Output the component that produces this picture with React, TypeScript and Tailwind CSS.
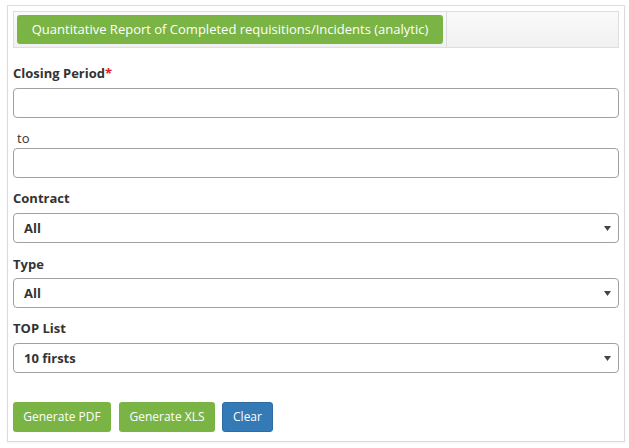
import React from "react";

const font = { fontFamily: '"Open Sans", "Noto Sans", sans-serif' };

function Arrow() {
  return (
    <svg width="7" height="5" viewBox="0 0 7 5" className="absolute right-[7px] top-[12px]">
      <path d="M0 0 H7 L3.5 5 Z" fill="#444" />
    </svg>
  );
}

function Select({ value }: { value: string }) {
  return (
    <div className="relative h-[30px] w-full rounded-[4px] border border-[#a0a0a0] bg-white pl-[10px] text-[13px] font-bold leading-[28px] text-[#333]">
      {value}
      <Arrow />
    </div>
  );
}

function Input() {
  return <div className="h-[30px] w-full rounded-[4px] border border-[#a0a0a0] bg-white" />;
}

export default function App() {
  return (
    <div className="h-[448px] w-[629px] bg-white pl-[7px] pt-[5px]" style={font}>
      <div className="w-[618px] border border-[#dcdcdc] bg-white px-[5px] pt-[5px] pb-[9px] shadow-[0_1px_2px_rgba(0,0,0,0.05)]">
        <div className="flex h-[37px] border border-[#dedede] bg-[linear-gradient(#fafafa,#f1f1f1)]">
          <div className="flex h-[35px] items-center border-r border-[#dcdcdc] pl-[3px] pr-[3px]">
            <div className="flex h-[29px] w-[426px] items-center justify-center rounded-[3px] bg-[#7ab445] text-[13px] text-white">
              Quantitative Report of Completed requisitions/Incidents (analytic)
            </div>
          </div>
        </div>

        <div className="mt-[16px] h-[18px] text-[13px] font-bold leading-[18px] text-[#333]">
          Closing Period<span className="text-[#e02020]">*</span>
        </div>
        <div className="mt-[6px]"><Input /></div>

        <div className="mt-[11px] h-[18px] pl-[4px] text-[13px] leading-[18px] text-[#333]">to</div>
        <div className="mt-[1px]"><Input /></div>

        <div className="mt-[11px] h-[18px] text-[13px] font-bold leading-[18px] text-[#333]">Contract</div>
        <div className="mt-[6px]"><Select value="All" /></div>

        <div className="mt-[12px] h-[18px] text-[13px] font-bold leading-[18px] text-[#333]">Type</div>
        <div className="mt-[5px]"><Select value="All" /></div>

        <div className="mt-[11px] h-[18px] text-[13px] font-bold leading-[18px] text-[#333]">TOP List</div>
        <div className="mt-[6px]"><Select value="10 firsts" /></div>

        <div className="mt-[29px] flex gap-[8px]">
          <div className="flex h-[30px] w-[98px] items-center justify-center rounded-[3px] bg-[#7ab445] text-[12px] text-white">Generate PDF</div>
          <div className="flex h-[30px] w-[96px] items-center justify-center rounded-[3px] bg-[#7ab445] text-[12px] text-white">Generate XLS</div>
          <div className="ml-[-1px] flex h-[30px] w-[51px] items-center justify-center rounded-[3px] border border-[#2e6da4] bg-[#337ab7] text-[12px] text-white">Clear</div>
        </div>
      </div>
    </div>
  );
}
